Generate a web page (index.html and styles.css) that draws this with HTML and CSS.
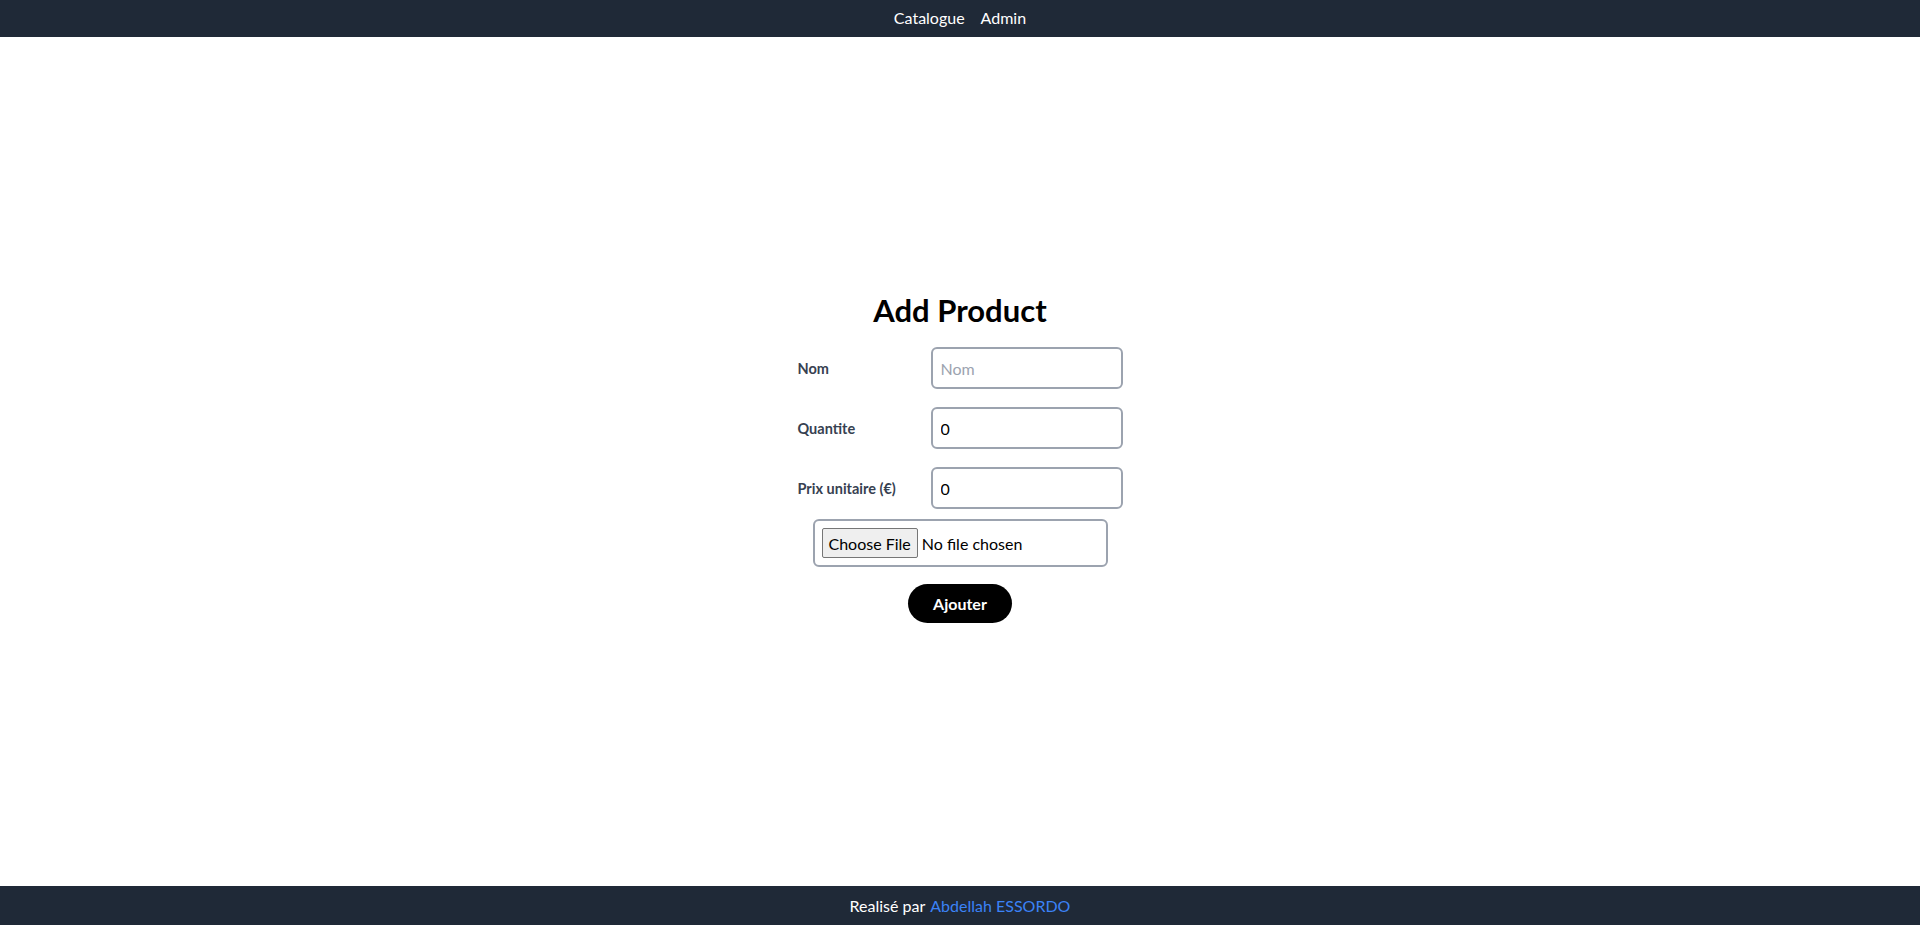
FILE: index.html
```html
<!DOCTYPE html>
<html lang="fr">
<head>
<meta charset="utf-8">
<title>Add Product</title>
<link rel="stylesheet" href="styles.css">
</head>
<body>
<header class="topbar">
  <nav class="nav">
    <a class="nav-link" href="#">Catalogue</a>
    <a class="nav-link" href="#">Admin</a>
  </nav>
</header>
<main class="main">
  <form class="product-form">
    <h1 class="title">Add Product</h1>
    <div class="row">
      <label class="label" for="nom">Nom</label>
      <input class="field" id="nom" type="text" placeholder="Nom">
    </div>
    <div class="row">
      <label class="label" for="qte">Quantite</label>
      <input class="field" id="qte" type="number" value="0">
    </div>
    <div class="row">
      <label class="label" for="prix">Prix unitaire (€)</label>
      <input class="field" id="prix" type="number" value="0">
    </div>
    <div class="file-box">
      <input class="file-input" type="file">
    </div>
    <button class="submit" type="button">Ajouter</button>
  </form>
</main>
<footer class="footer">
  Realisé par <a class="footer-link" href="#">Abdellah ESSORDO</a>
</footer>
</body>
</html>
```
FILE: styles.css
```css
* { box-sizing: border-box; }
html, body { margin: 0; padding: 0; }
body {
  font-family: Lato, "Noto Sans", sans-serif;
  min-height: 100vh;
  display: flex;
  flex-direction: column;
  color: #000;
  background: #fff;
}
.topbar {
  background: #1f2937;
  height: 37px;
  padding-bottom: 3px;
  display: flex;
  align-items: center;
  justify-content: center;
}
.nav { display: flex; gap: 16px; }
.nav-link {
  color: #fff;
  text-decoration: none;
  font-size: 16px;
}
.main {
  flex: 1;
  display: flex;
  align-items: center;
  justify-content: center;
  padding-bottom: 8px;
}
.product-form {
  display: flex;
  flex-direction: column;
  align-items: center;
  width: 325px;
}
.title {
  margin: 0 0 19px;
  font-size: 31px;
  line-height: 36px;
  font-weight: 700;
}
.row {
  width: 100%;
  display: flex;
  align-items: center;
  margin-bottom: 18px;
}
.row:nth-of-type(3) { margin-bottom: 10px; }
.label {
  width: 133px;
  font-size: 14.5px;
  font-weight: 700;
  color: #374151;
}
.field {
  width: 192px;
  height: 42px;
  border: 2px solid #9ca3af;
  border-radius: 6px;
  padding: 0 8px;
  font-family: inherit;
  font-size: 16px;
  color: #000;
  outline: none;
  -moz-appearance: textfield;
}
.field::-webkit-outer-spin-button,
.field::-webkit-inner-spin-button { -webkit-appearance: none; margin: 0; }
.field::placeholder { color: #9ca3af; }
.file-box {
  width: 295px;
  height: 48px;
  border: 2px solid #9ca3af;
  border-radius: 6px;
  padding: 0 7px;
  display: flex;
  align-items: center;
  margin-bottom: 17px;
}
.file-input {
  font-family: inherit;
  font-size: 16px;
  color: #000;
}
.file-input::file-selector-button {
  font-family: inherit;
  font-size: 16px;
  height: 30px;
  padding: 0 6px;
  margin-right: 4px;
  background: #efefef;
  border: 1px solid #767676;
  border-radius: 2px;
  color: #000;
}
.submit {
  width: 104px;
  height: 39px;
  border: none;
  border-radius: 999px;
  background: #000;
  color: #fff;
  font-family: inherit;
  font-size: 16px;
  font-weight: 700;
}
.footer {
  background: #1f2937;
  height: 39px;
  display: flex;
  align-items: center;
  justify-content: center;
  color: #fff;
  font-size: 16px;
  gap: 5px;
}
.footer-link { color: #3b82f6; text-decoration: none; }
```
